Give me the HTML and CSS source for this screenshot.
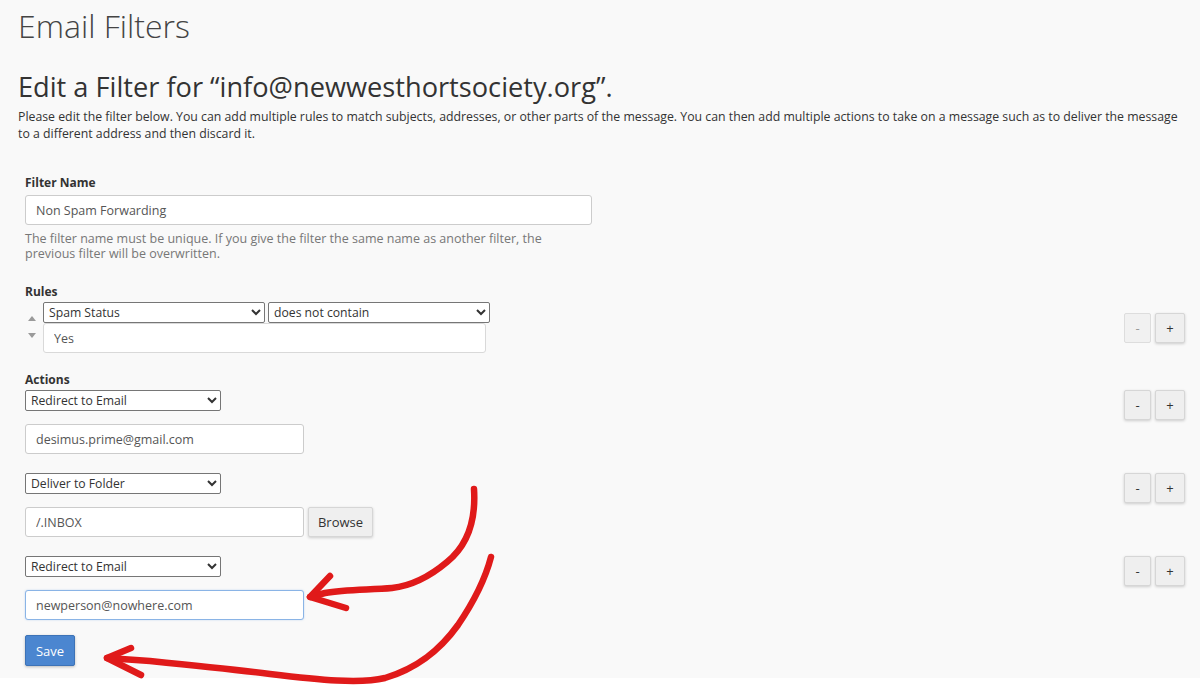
FILE: index.html
```html
<!DOCTYPE html>
<html>
<head>
<meta charset="utf-8">
<link rel="stylesheet" href="styles.css">
</head>
<body>
<div class="page">
  <h1 class="title">Email Filters</h1>
  <h2 class="subtitle">Edit a Filter for “info@newwesthortsociety.org”.</h2>
  <p class="intro">Please edit the filter below. You can add multiple rules to match subjects, addresses, or other parts of the message. You can then add multiple actions to take on a message such as to deliver the message to a different address and then discard it.</p>

  <form class="form">
    <div class="group">
      <label class="label">Filter Name</label>
      <input class="input input-name" type="text" value="Non Spam Forwarding">
      <div class="help">The filter name must be unique. If you give the filter the same name as another filter, the previous filter will be overwritten.</div>
    </div>

    <div class="group group-rules">
      <label class="label">Rules</label>
      <div class="row row-center">
        <div class="rule">
          <div class="sorter">
            <span class="tri tri-up"></span>
            <span class="tri tri-down"></span>
          </div>
          <div class="rule-fields">
            <div class="rule-selects">
              <select class="sel sel-rule"><option>Spam Status</option></select>
              <select class="sel sel-rule"><option>does not contain</option></select>
            </div>
            <input class="input input-rule" type="text" value="Yes">
          </div>
        </div>
        <div class="pm">
          <button type="button" class="btn btn-sm btn-disabled">-</button>
          <button type="button" class="btn btn-sm">+</button>
        </div>
      </div>
    </div>

    <div class="group group-actions">
      <label class="label">Actions</label>
      <div class="row">
        <div class="action">
          <select class="sel sel-action"><option>Redirect to Email</option></select>
          <input class="input input-action" type="text" value="desimus.prime@gmail.com">
        </div>
        <div class="pm">
          <button type="button" class="btn btn-sm">-</button>
          <button type="button" class="btn btn-sm">+</button>
        </div>
      </div>
      <div class="row">
        <div class="action">
          <select class="sel sel-action"><option>Deliver to Folder</option></select>
          <div class="folder">
            <input class="input input-action" type="text" value="/.INBOX">
            <button type="button" class="btn btn-browse">Browse</button>
          </div>
        </div>
        <div class="pm">
          <button type="button" class="btn btn-sm">-</button>
          <button type="button" class="btn btn-sm">+</button>
        </div>
      </div>
      <div class="row">
        <div class="action">
          <select class="sel sel-action"><option>Redirect to Email</option></select>
          <input class="input input-action input-focus" type="text" value="newperson@nowhere.com">
        </div>
        <div class="pm">
          <button type="button" class="btn btn-sm">-</button>
          <button type="button" class="btn btn-sm">+</button>
        </div>
      </div>
    </div>

    <button type="button" class="btn btn-save">Save</button>
  </form>
</div>

<svg class="scribble" width="1200" height="687" viewBox="0 0 1200 687">
  <g fill="none" stroke="#e01a1a" stroke-width="6.5" stroke-linecap="round" stroke-linejoin="round">
    <path d="M474 489 C476 520 468 545 447 562 C428 578 410 586 392 588 C370 590 345 589 325 593 L310 597"/>
    <path d="M330 576 L310 597 L346 608"/>
    <path d="M491 557 C485 580 475 600 458 625 C440 650 418 668 385 678 C360 684 320 680 270 674 C230 669 190 665 150 661 L107 658"/>
    <path d="M131 648 L107 658 L141 675"/>
  </g>
</svg>
</body>
</html>
```

FILE: styles.css
```css
html, body {
  margin: 0;
  padding: 0;
  background: #ffffff;
}

body {
  font-family: "Open Sans", "Liberation Sans", sans-serif;
  color: #333333;
  font-size: 12px;
}

.page {
  background: #f9f9f9;
  height: 678px;
  padding: 0 8px 0 18px;
  box-sizing: border-box;
}

.title {
  margin: 0;
  padding-top: 8px;
  font-size: 32px;
  font-weight: 300;
  line-height: 35px;
  color: #444;
}

.subtitle {
  margin: 29px 0 0;
  font-size: 27.2px;
  font-weight: 400;
  line-height: 30px;
  color: #333;
}

.intro {
  margin: 6px 0 0;
  font-size: 12.3px;
  line-height: 17px;
  color: #333;
}

.form {
  margin: 32px 7px 0 7px;
}

.group {
  display: flex;
  flex-direction: column;
}

.label {
  font-weight: 700;
  font-size: 12px;
  line-height: 17px;
  color: #333;
  margin-bottom: 4px;
}

.input {
  box-sizing: border-box;
  height: 30px;
  border: 1px solid #cccccc;
  border-radius: 3px;
  background: #ffffff;
  font-family: "Open Sans", "Liberation Sans", sans-serif;
  font-size: 12.5px;
  color: #555555;
  padding: 0 10px;
  outline: none;
}

.input-name {
  width: 567px;
}

.help {
  margin-top: 6px;
  width: 535px;
  font-size: 12.5px;
  line-height: 15px;
  color: #777777;
}

.group-rules {
  margin-top: 22px;
}

.group-rules .label {
  margin-bottom: 2px;
}

.row {
  display: flex;
  align-items: flex-start;
  justify-content: space-between;
}

.row-center {
  align-items: center;
}

.rule {
  display: flex;
  align-items: flex-start;
}

.sorter {
  width: 18px;
  display: flex;
  flex-direction: column;
  align-items: flex-start;
  gap: 12px;
  padding-left: 3px;
  box-sizing: border-box;
}

.tri {
  width: 0;
  height: 0;
  border-left: 4px solid transparent;
  border-right: 4px solid transparent;
}

.tri-up {
  border-bottom: 5px solid #9a9a9a;
  margin-top: 14px;
}

.tri-down {
  border-top: 5px solid #9a9a9a;
}

.rule-fields {
  display: flex;
  flex-direction: column;
}

.rule-selects {
  display: flex;
  gap: 3px;
}

.sel {
  box-sizing: border-box;
  height: 21px;
  border: 1px solid #767676;
  border-radius: 2px;
  background: #ffffff;
  font-family: "Open Sans", "Liberation Sans", sans-serif;
  font-size: 12.2px;
  color: #333;
  padding: 0 1px;
}

.sel-rule {
  width: 222px;
}

.input-rule {
  width: 443px;
  margin-top: 0;
  border-color: #d9d9d9;
}

.pm {
  display: flex;
  gap: 4px;
}

.btn {
  box-sizing: border-box;
  font-family: "Open Sans", "Liberation Sans", sans-serif;
  font-size: 13px;
  color: #333;
  background: #efefef;
  border: 1px solid #d6d6d6;
  border-radius: 2px;
  box-shadow: 0 1px 3px rgba(0, 0, 0, 0.18);
  padding: 0;
  cursor: pointer;
}

.btn-sm {
  width: 27px;
  height: 30px;
  line-height: 26px;
}

.btn-sm + .btn-sm {
  width: 30px;
}

.btn-disabled {
  color: #999;
  box-shadow: none;
  background: #f1f1f1;
  border-color: #dddddd;
}

.group-actions {
  margin-top: 18px;
}

.group-actions .label {
  margin-bottom: 2px;
}

.group-actions .row + .row {
  margin-top: 19px;
}

.action {
  display: flex;
  flex-direction: column;
  align-items: flex-start;
  gap: 13px;
}

.sel-action {
  width: 196px;
}

.input-action {
  width: 279px;
}

.folder {
  display: flex;
  gap: 4px;
}

.btn-browse {
  height: 30px;
  width: 65px;
}

.input-focus {
  border-color: #8ab4e6;
  box-shadow: 0 0 2px rgba(80, 140, 220, 0.35);
}

.btn-save {
  margin-top: 15px;
  width: 50px;
  height: 31px;
  background: #4b86d0;
  border-color: #3d73b7;
  color: #ffffff;
  font-size: 13px;
  box-shadow: 0 1px 3px rgba(0, 0, 0, 0.25);
}

.scribble {
  position: absolute;
  left: 0;
  top: 0;
  pointer-events: none;
}
```
